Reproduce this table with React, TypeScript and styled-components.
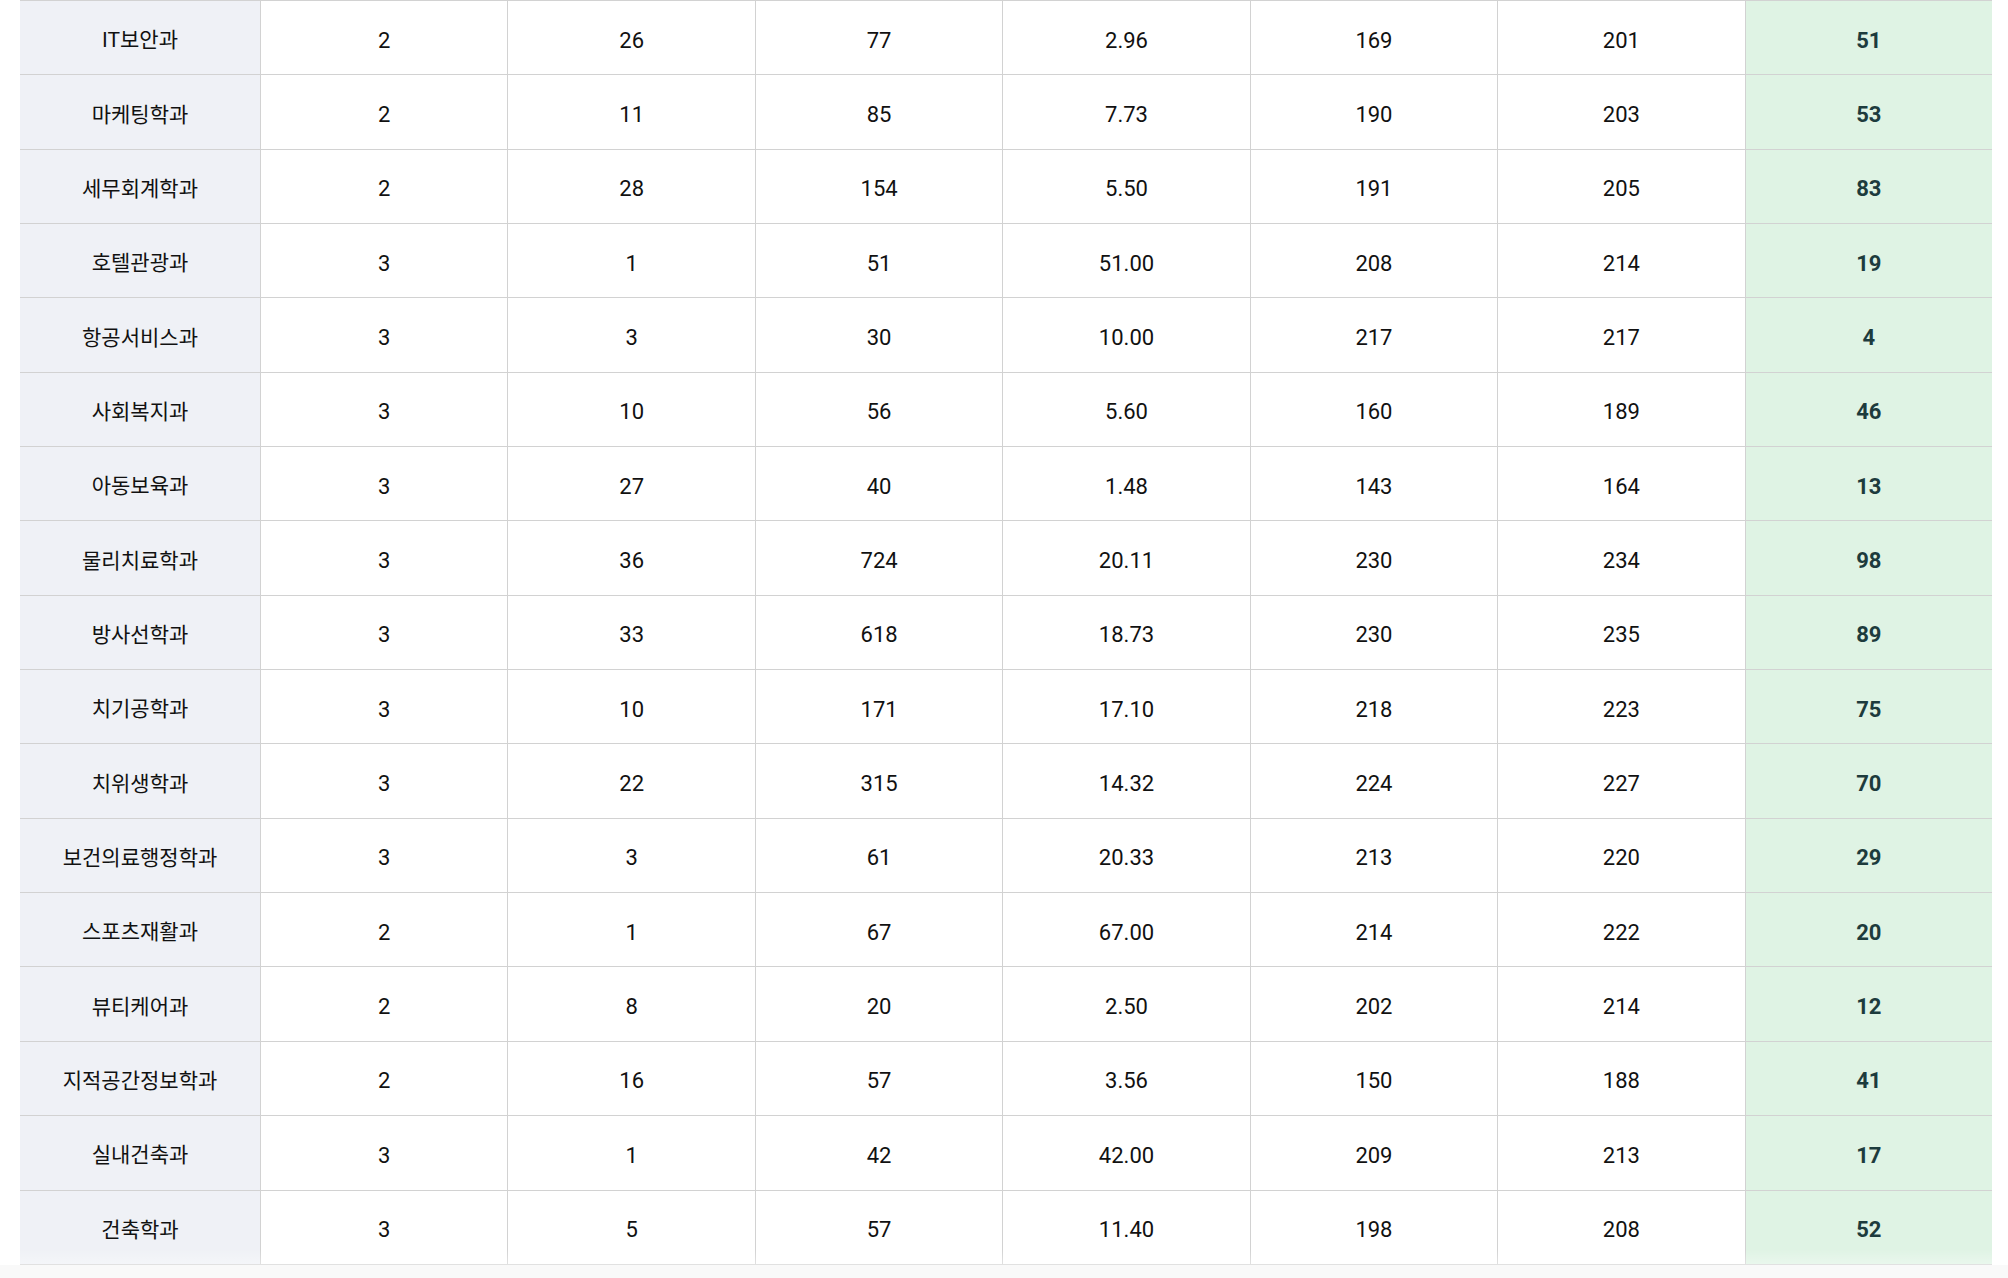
import React from "react";
import styled, { createGlobalStyle } from "styled-components";

const GlobalStyle = createGlobalStyle`
  html, body {
    margin: 0;
    padding: 0;
    background: #f9f9f9;
  }
  body {
    font-family: Roboto, "Noto Sans CJK KR", "Noto Sans", sans-serif;
    color: #111111;
  }
`;

const Page = styled.main`
  background: #ffffff;
  padding: 0 16px 0 20px;
`;

const TableWrap = styled.div`
  position: relative;
  border-top: 1px solid #d2d2d2;
  &::after {
    content: "";
    position: absolute;
    left: 0;
    right: 0;
    bottom: 0;
    height: 16px;
    pointer-events: none;
    background: linear-gradient(rgba(255, 255, 255, 0), rgba(255, 255, 255, 0.35));
  }
`;

const Row = styled.div`
  display: grid;
  grid-template-columns: 240px repeat(7, 1fr);
  height: 74.35px;
  box-sizing: border-box;
  border-bottom: 1px solid #d2d2d2;
`;

const Cell = styled.div<{ $variant?: "head" | "total" }>`
  display: flex;
  align-items: center;
  justify-content: center;
  font-size: ${(p) => (p.$variant === "head" ? "21px" : "22px")};
  line-height: 1;
  font-weight: ${(p) => (p.$variant === "total" ? 700 : 400)};
  color: ${(p) => (p.$variant === "total" ? "#1d3b3d" : "#111111")};
  background: ${(p) =>
    p.$variant === "head" ? "#eff1f6" : p.$variant === "total" ? "#dff3e4" : "#ffffff"};
  border-left: ${(p) => (p.$variant === "head" ? "none" : "1px solid #d2d2d2")};
  padding-top: 6px;
  box-sizing: border-box;
`;

const rows: [string, number, number, number, string, number, number, number][] = [
  ["IT보안과", 2, 26, 77, "2.96", 169, 201, 51],
  ["마케팅학과", 2, 11, 85, "7.73", 190, 203, 53],
  ["세무회계학과", 2, 28, 154, "5.50", 191, 205, 83],
  ["호텔관광과", 3, 1, 51, "51.00", 208, 214, 19],
  ["항공서비스과", 3, 3, 30, "10.00", 217, 217, 4],
  ["사회복지과", 3, 10, 56, "5.60", 160, 189, 46],
  ["아동보육과", 3, 27, 40, "1.48", 143, 164, 13],
  ["물리치료학과", 3, 36, 724, "20.11", 230, 234, 98],
  ["방사선학과", 3, 33, 618, "18.73", 230, 235, 89],
  ["치기공학과", 3, 10, 171, "17.10", 218, 223, 75],
  ["치위생학과", 3, 22, 315, "14.32", 224, 227, 70],
  ["보건의료행정학과", 3, 3, 61, "20.33", 213, 220, 29],
  ["스포츠재활과", 2, 1, 67, "67.00", 214, 222, 20],
  ["뷰티케어과", 2, 8, 20, "2.50", 202, 214, 12],
  ["지적공간정보학과", 2, 16, 57, "3.56", 150, 188, 41],
  ["실내건축과", 3, 1, 42, "42.00", 209, 213, 17],
  ["건축학과", 3, 5, 57, "11.40", 198, 208, 52],
];

export default function App() {
  return (
    <>
      <GlobalStyle />
      <Page>
        <TableWrap>
          {rows.map(([name, a, b, c, d, e, f, g]) => (
            <Row key={name}>
              <Cell $variant="head">{name}</Cell>
              <Cell>{a}</Cell>
              <Cell>{b}</Cell>
              <Cell>{c}</Cell>
              <Cell>{d}</Cell>
              <Cell>{e}</Cell>
              <Cell>{f}</Cell>
              <Cell $variant="total">{g}</Cell>
            </Row>
          ))}
        </TableWrap>
      </Page>
    </>
  );
}
